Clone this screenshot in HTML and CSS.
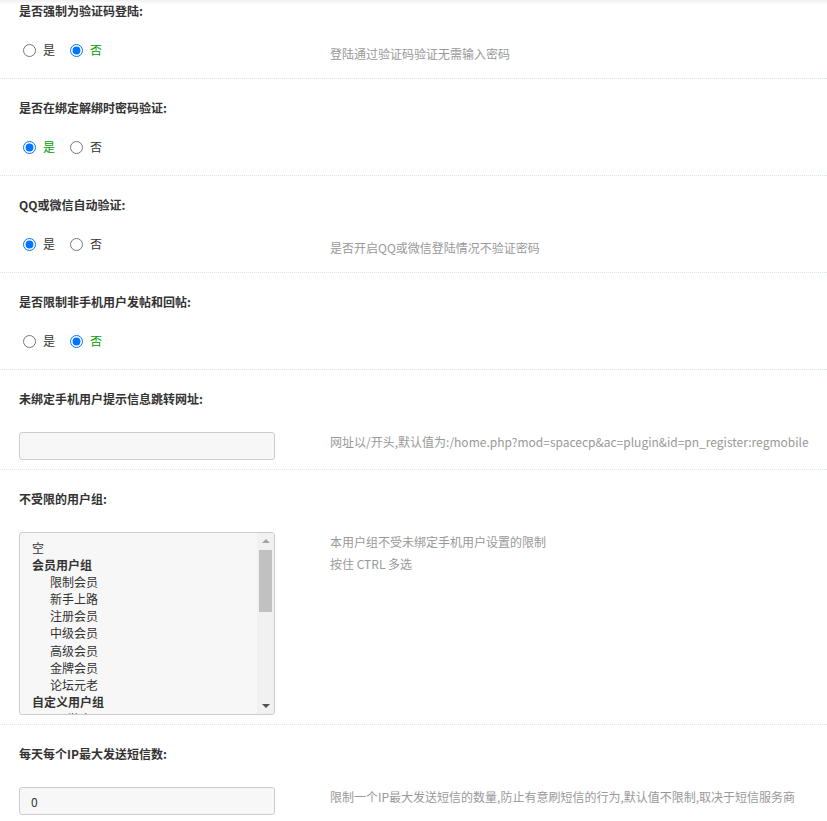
FILE: index.html
```html
<!DOCTYPE html>
<html lang="zh-CN">
<head>
<meta charset="utf-8">
<title>设置</title>
<link rel="stylesheet" href="styles.css">
</head>
<body>
<div class="topshade"></div>
<div class="form">
  <div class="row row-radio">
    <div class="title">是否强制为验证码登陆:</div>
    <div class="body">
      <div class="field">
        <div class="radios">
          <label class="opt"><input type="radio" name="r1">是</label>
          <label class="opt on"><input type="radio" name="r1" checked>否</label>
        </div>
      </div>
      <div class="desc">登陆通过验证码验证无需输入密码</div>
    </div>
  </div>
  <div class="row row-radio">
    <div class="title">是否在绑定解绑时密码验证:</div>
    <div class="body">
      <div class="field">
        <div class="radios">
          <label class="opt on"><input type="radio" name="r2" checked>是</label>
          <label class="opt"><input type="radio" name="r2">否</label>
        </div>
      </div>
      <div class="desc"></div>
    </div>
  </div>
  <div class="row row-radio">
    <div class="title">QQ或微信自动验证:</div>
    <div class="body">
      <div class="field">
        <div class="radios">
          <label class="opt"><input type="radio" name="r3" checked>是</label>
          <label class="opt"><input type="radio" name="r3">否</label>
        </div>
      </div>
      <div class="desc">是否开启QQ或微信登陆情况不验证密码</div>
    </div>
  </div>
  <div class="row row-radio">
    <div class="title">是否限制非手机用户发帖和回帖:</div>
    <div class="body">
      <div class="field">
        <div class="radios">
          <label class="opt"><input type="radio" name="r4">是</label>
          <label class="opt on"><input type="radio" name="r4" checked>否</label>
        </div>
      </div>
      <div class="desc"></div>
    </div>
  </div>
  <div class="row">
    <div class="title">未绑定手机用户提示信息跳转网址:</div>
    <div class="body">
      <div class="field"><input class="text" type="text" value=""></div>
      <div class="desc">网址以/开头,默认值为:/home.php?mod=spacecp&amp;ac=plugin&amp;id=pn_register:regmobile</div>
    </div>
  </div>
  <div class="row">
    <div class="title">不受限的用户组:</div>
    <div class="body">
      <div class="field">
        <div class="listbox" role="listbox" aria-multiselectable="true">
          <div class="items">
            <div class="item">空</div>
            <div class="group">会员用户组</div>
            <div class="item sub">限制会员</div>
            <div class="item sub">新手上路</div>
            <div class="item sub">注册会员</div>
            <div class="item sub">中级会员</div>
            <div class="item sub">高级会员</div>
            <div class="item sub">金牌会员</div>
            <div class="item sub">论坛元老</div>
            <div class="group">自定义用户组</div>
            <div class="item sub">QQ游客</div>
          </div>
          <div class="sbar">
            <div class="sbtn up"></div>
            <div class="strack"><div class="sthumb"></div></div>
            <div class="sbtn down"></div>
          </div>
        </div>
      </div>
      <div class="desc">本用户组不受未绑定手机用户设置的限制<br>按住 CTRL 多选</div>
    </div>
  </div>
  <div class="row last">
    <div class="title">每天每个IP最大发送短信数:</div>
    <div class="body">
      <div class="field"><input class="text" type="text" value="0"></div>
      <div class="desc">限制一个IP最大发送短信的数量,防止有意刷短信的行为,默认值不限制,取决于短信服务商</div>
    </div>
  </div>
</div>
</body>
</html>
```
FILE: styles.css
```css
html, body {
  margin: 0;
  padding: 0;
  background: #fff;
}
body {
  font-family: "Noto Sans CJK SC", "Liberation Sans", sans-serif;
  font-size: 12px;
  color: #333;
  overflow: hidden;
}
.topshade {
  position: fixed;
  top: 0;
  left: 0;
  right: 0;
  height: 4px;
  background: linear-gradient(rgba(0,0,0,0.06), rgba(0,0,0,0));
  z-index: 2;
}
.form {
  margin-top: -18px;
}
.row {
  padding: 20px 0 9px 19px;
  border-bottom: 1px dotted #dbe7f0;
}
.row.last {
  border-bottom: none;
}
.title {
  font-weight: bold;
  line-height: 18px;
  color: #333;
}
.body {
  display: flex;
  margin-top: 24px;
}
.field {
  width: 311px;
  flex: none;
}
.row-radio .body {
  height: 25px;
}
.radios {
  display: flex;
  align-items: center;
  height: 20px;
  margin-top: -4px;
}
.opt {
  display: flex;
  align-items: center;
  margin-right: 11px;
  line-height: 20px;
}
.opt input {
  margin: 0 7px 0 4px;
  width: 13px;
  height: 13px;
}
.opt.on {
  color: #00a000;
}
.desc {
  color: #999;
  line-height: 22px;
  margin-top: -1px;
  white-space: nowrap;
}
.text {
  box-sizing: border-box;
  width: 256px;
  height: 28px;
  margin: 0;
  padding: 0 11px;
  border: 1px solid #ccc;
  border-radius: 3px;
  background: #f7f7f7;
  font-family: inherit;
  font-size: 12px;
  color: #333;
  outline: none;
}
.listbox {
  box-sizing: border-box;
  display: flex;
  width: 256px;
  height: 183px;
  border: 1px solid #ccc;
  border-radius: 3px;
  background: #f7f7f7;
  overflow: hidden;
}
.items {
  flex: 1;
  overflow: hidden;
  padding: 6px 0 0 12px;
  line-height: 17.1px;
  color: #333;
}
.item {
  white-space: nowrap;
}
.item.sub {
  padding-left: 18px;
}
.group {
  font-weight: bold;
  white-space: nowrap;
}
.sbar {
  width: 17px;
  flex: none;
  display: flex;
  flex-direction: column;
  background: #f1f1f1;
}
.sbtn {
  height: 17px;
  flex: none;
  display: flex;
  align-items: center;
  justify-content: center;
}
.sbtn.up::before {
  content: "";
  border-left: 4px solid transparent;
  border-right: 4px solid transparent;
  border-bottom: 4px solid #a3a3a3;
  margin-top: -2px;
}
.sbtn.down::before {
  content: "";
  border-left: 4px solid transparent;
  border-right: 4px solid transparent;
  border-top: 4px solid #505050;
  margin-top: 1px;
}
.strack {
  flex: 1;
  padding: 0 2px;
}
.sthumb {
  height: 62px;
  background: #c1c1c1;
}
```
